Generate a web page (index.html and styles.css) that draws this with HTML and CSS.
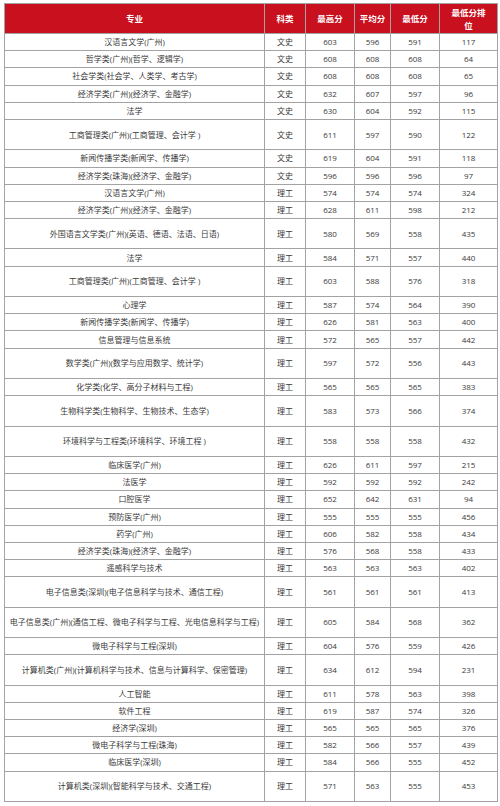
FILE: index.html
```html
<!DOCTYPE html>
<html lang="zh">
<head>
<meta charset="utf-8">
<title>分数表</title>
<link rel="stylesheet" href="styles.css">
</head>
<body>
<table class="scores">
  <colgroup>
    <col class="c-major"><col class="c-type"><col class="c-max"><col class="c-avg"><col class="c-min"><col class="c-rank">
  </colgroup>
  <thead>
    <tr class="head"><th>专业</th><th>科类</th><th>最高分</th><th>平均分</th><th>最低分</th><th>最低分排<br>位</th></tr>
  </thead>
  <tbody>
    <tr class="n"><td>汉语言文学(广州)</td><td>文史</td><td>603</td><td>596</td><td>591</td><td>117</td></tr>
    <tr class="n"><td>哲学类(广州)(哲学、逻辑学)</td><td>文史</td><td>608</td><td>608</td><td>608</td><td>64</td></tr>
    <tr class="n"><td>社会学类(社会学、人类学、考古学)</td><td>文史</td><td>608</td><td>608</td><td>608</td><td>65</td></tr>
    <tr class="n"><td>经济学类(广州)(经济学、金融学)</td><td>文史</td><td>632</td><td>607</td><td>597</td><td>96</td></tr>
    <tr class="n"><td>法学</td><td>文史</td><td>630</td><td>604</td><td>592</td><td>115</td></tr>
    <tr class="t"><td>工商管理类(广州)(工商管理、会计学 )</td><td>文史</td><td>611</td><td>597</td><td>590</td><td>122</td></tr>
    <tr class="n"><td>新闻传播学类(新闻学、传播学)</td><td>文史</td><td>619</td><td>604</td><td>591</td><td>118</td></tr>
    <tr class="n"><td>经济学类(珠海)(经济学、金融学)</td><td>文史</td><td>596</td><td>596</td><td>596</td><td>97</td></tr>
    <tr class="n"><td>汉语言文学(广州)</td><td>理工</td><td>574</td><td>574</td><td>574</td><td>324</td></tr>
    <tr class="n"><td>经济学类(广州)(经济学、金融学)</td><td>理工</td><td>628</td><td>611</td><td>598</td><td>212</td></tr>
    <tr class="t"><td>外国语言文学类(广州)(英语、德语、法语、日语)</td><td>理工</td><td>580</td><td>569</td><td>558</td><td>435</td></tr>
    <tr class="n"><td>法学</td><td>理工</td><td>584</td><td>571</td><td>557</td><td>440</td></tr>
    <tr class="t"><td>工商管理类(广州)(工商管理、会计学 )</td><td>理工</td><td>603</td><td>588</td><td>576</td><td>318</td></tr>
    <tr class="n"><td>心理学</td><td>理工</td><td>587</td><td>574</td><td>564</td><td>390</td></tr>
    <tr class="n"><td>新闻传播学类(新闻学、传播学)</td><td>理工</td><td>626</td><td>581</td><td>563</td><td>400</td></tr>
    <tr class="n"><td>信息管理与信息系统</td><td>理工</td><td>572</td><td>565</td><td>557</td><td>442</td></tr>
    <tr class="t"><td>数学类(广州)(数学与应用数学、统计学)</td><td>理工</td><td>597</td><td>572</td><td>556</td><td>443</td></tr>
    <tr class="n"><td>化学类(化学、高分子材料与工程)</td><td>理工</td><td>565</td><td>565</td><td>565</td><td>383</td></tr>
    <tr class="t"><td>生物科学类(生物科学、生物技术、生态学)</td><td>理工</td><td>583</td><td>573</td><td>566</td><td>374</td></tr>
    <tr class="t"><td>环境科学与工程类(环境科学、环境工程 )</td><td>理工</td><td>558</td><td>558</td><td>558</td><td>432</td></tr>
    <tr class="n"><td>临床医学(广州)</td><td>理工</td><td>626</td><td>611</td><td>597</td><td>215</td></tr>
    <tr class="n"><td>法医学</td><td>理工</td><td>592</td><td>592</td><td>592</td><td>242</td></tr>
    <tr class="n"><td>口腔医学</td><td>理工</td><td>652</td><td>642</td><td>631</td><td>94</td></tr>
    <tr class="n"><td>预防医学(广州)</td><td>理工</td><td>555</td><td>555</td><td>555</td><td>456</td></tr>
    <tr class="n"><td>药学(广州)</td><td>理工</td><td>606</td><td>582</td><td>558</td><td>434</td></tr>
    <tr class="n"><td>经济学类(珠海)(经济学、金融学)</td><td>理工</td><td>576</td><td>568</td><td>558</td><td>433</td></tr>
    <tr class="n"><td>遥感科学与技术</td><td>理工</td><td>563</td><td>563</td><td>563</td><td>402</td></tr>
    <tr class="t"><td>电子信息类(深圳)(电子信息科学与技术、通信工程)</td><td>理工</td><td>561</td><td>561</td><td>561</td><td>413</td></tr>
    <tr class="t"><td>电子信息类(广州)(通信工程、微电子科学与工程、光电信息科学与工程)</td><td>理工</td><td>605</td><td>584</td><td>568</td><td>362</td></tr>
    <tr class="n"><td>微电子科学与工程(深圳)</td><td>理工</td><td>604</td><td>576</td><td>559</td><td>426</td></tr>
    <tr class="t"><td>计算机类(广州)(计算机科学与技术、信息与计算科学、保密管理)</td><td>理工</td><td>634</td><td>612</td><td>594</td><td>231</td></tr>
    <tr class="n"><td>人工智能</td><td>理工</td><td>611</td><td>578</td><td>563</td><td>398</td></tr>
    <tr class="n"><td>软件工程</td><td>理工</td><td>619</td><td>587</td><td>574</td><td>326</td></tr>
    <tr class="n"><td>经济学(深圳)</td><td>理工</td><td>565</td><td>565</td><td>565</td><td>376</td></tr>
    <tr class="n"><td>微电子科学与工程(珠海)</td><td>理工</td><td>582</td><td>566</td><td>557</td><td>439</td></tr>
    <tr class="n"><td>临床医学(深圳)</td><td>理工</td><td>584</td><td>566</td><td>555</td><td>452</td></tr>
    <tr class="t"><td>计算机类(深圳)(智能科学与技术、交通工程)</td><td>理工</td><td>571</td><td>563</td><td>555</td><td>453</td></tr>
  </tbody>
</table>
</body>
</html>
```

FILE: styles.css
```css
html, body {
  margin: 0;
  padding: 0;
  background: #ffffff;
}

body {
  padding: 3px 3px 0 4px;
  font-family: "Open Sans", "Noto Sans CJK SC", sans-serif;
  font-size: 8px;
  color: #3a3a3a;
}

.scores {
  width: 493px;
  border-collapse: collapse;
  table-layout: fixed;
}

.c-major { width: 260px; }
.c-type { width: 41px; }
.c-max { width: 49px; }
.c-avg { width: 36px; }
.c-min { width: 49px; }
.c-rank { width: 58px; }

.scores th,
.scores td {
  border: 1px solid #a3a3a3;
  padding: 0;
  text-align: center;
  vertical-align: middle;
  white-space: nowrap;
  line-height: 10px;
}

.scores th {
  background: #c8101e;
  color: #ffffff;
  font-weight: 700;
  font-size: 8.5px;
  line-height: 13px;
}

.head { height: 30px; }
.n { height: 17.2px; }
.t { height: 30.4px; }
```
